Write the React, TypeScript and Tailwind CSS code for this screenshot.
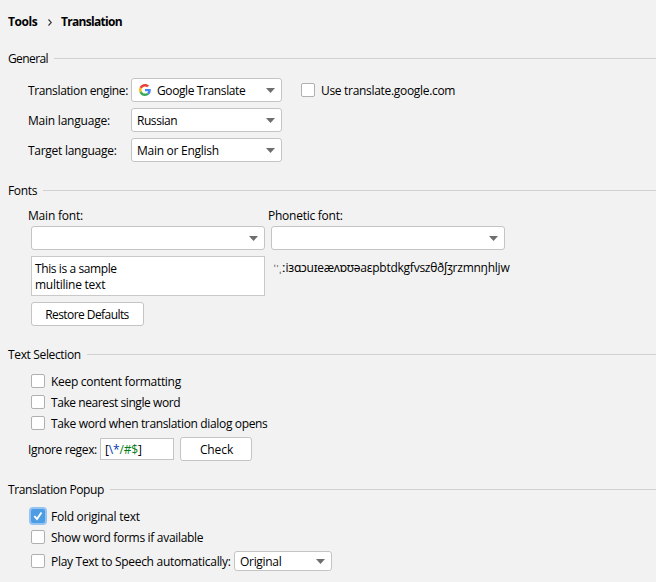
import React from 'react';

function Label({ children, className = '' }: { children: React.ReactNode; className?: string }) {
  return <span className={`whitespace-pre ${className}`}>{children}</span>;
}

function Section({ title, track = '', className = '' }: { title: string; track?: string; className?: string }) {
  return (
    <div className={`ml-2 flex h-4 items-center ${className}`}>
      <Label className={`shrink-0 ${track}`}>{title}</Label>
      <div className="mb-[2px] h-px flex-1 bg-[#d1d1d1]" />
    </div>
  );
}

function Select({ children, className = '' }: { children?: React.ReactNode; className?: string }) {
  return (
    <div className={`flex shrink-0 items-center rounded-[3px] border border-[#c4c4c4] bg-white pr-[6px] pl-[5px] ${className}`}>
      {children}
      <svg className="ml-auto" width="9" height="5" viewBox="0 0 9 5">
        <path d="M0 0h9L4.500 5z" fill="#6e6e6e" />
      </svg>
    </div>
  );
}

function Checkbox({ checked = false }: { checked?: boolean }) {
  if (checked) {
    return (
      <div className="flex h-[14px] w-[14px] shrink-0 items-center justify-center rounded-[2px] bg-[#4d9de5] ring-2 ring-[#97c3f3]">
        <svg width="14" height="14" viewBox="0 0 14 14" fill="none">
          <path d="M3.300 7.200L6 10L10.500 3.500" stroke="white" strokeWidth="1.900" />
        </svg>
      </div>
    );
  }
  return <div className="h-[14px] w-[14px] shrink-0 rounded-[2px] border border-[#b0b0b0] bg-white" />;
}

function CheckRow({ text, checked, track = '', className = '' }: { text: string; checked?: boolean; track?: string; className?: string }) {
  return (
    <div className={`ml-[31px] flex h-[14px] items-center gap-[6px] ${className}`}>
      <Checkbox checked={checked} />
      <Label className={`pt-[2px] ${track}`}>{text}</Label>
    </div>
  );
}

function GoogleIcon() {
  return (
    <svg className="ml-[2px] mr-[6px] shrink-0" width="12" height="12" viewBox="0 0 48 48">
      <path fill="#EA4335" d="M24 9.500c3.540 0 6.710 1.220 9.210 3.600l6.850-6.850C35.900 2.380 30.470 0 24 0 14.620 0 6.510 5.380 2.560 13.220l7.980 6.190C12.430 13.720 17.740 9.500 24 9.500z" />
      <path fill="#4285F4" d="M46.980 24.550c0-1.570-.15-3.090-.38-4.550H24v9.020h12.940c-.58 2.960-2.260 5.480-4.780 7.180l7.730 6c4.510-4.180 7.090-10.360 7.090-17.650z" />
      <path fill="#FBBC05" d="M10.530 28.590c-.48-1.450-.76-2.990-.76-4.590s.27-3.140.76-4.590l-7.980-6.190C.92 16.460 0 20.120 0 24c0 3.880.92 7.540 2.560 10.780z" />
      <path fill="#34A853" d="M24 48c6.480 0 11.930-2.130 15.890-5.810l-7.730-6c-2.150 1.450-4.920 2.300-8.160 2.300-6.260 0-11.570-4.220-13.470-9.910l-7.980 6.190C6.510 42.620 14.620 48 24 48z" />
    </svg>
  );
}

export default function App() {
  return (
    <div className="flex h-[582px] w-[656px] flex-col overflow-hidden bg-[#f2f2f2] font-['Open_Sans','Noto_Sans',sans-serif] text-[12px] leading-4 text-black">
      <div className="mt-[14px] ml-2 flex h-4 shrink-0 items-center font-bold">
        <Label className="w-[40px] tracking-[-0.45px]">Tools</Label>
        <svg className="mr-[9px]" width="4" height="7" viewBox="0 0 4 7" fill="none">
          <path d="M.5.500L3.300 3.500L.5 6.500" stroke="#333" strokeWidth="1.100" />
        </svg>
        <Label className="tracking-[-0.7px]">Translation</Label>
      </div>

      <Section title="General" className="mt-[21px]" track="w-[46px] tracking-[-0.6px]" />
      <div className="mt-[11px] flex h-6 items-center">
        <Label className="ml-7 w-[103px] pt-[2px] tracking-[-0.36px]">Translation engine:</Label>
        <Select className="h-6 w-[151px]">
          <GoogleIcon />
          <Label className="pt-[2px] tracking-[-0.39px]">Google Translate</Label>
        </Select>
        <div className="ml-[19px] flex items-center gap-[6px]">
          <Checkbox />
          <Label className="pt-[2px] tracking-[-0.31px]">Use translate.google.com</Label>
        </div>
      </div>
      <div className="mt-[6px] flex h-6 items-center">
        <Label className="ml-7 w-[103px] pt-[2px] tracking-[-0.22px]">Main language:</Label>
        <Select className="h-6 w-[151px]"><Label className="pt-[2px] tracking-[-0.45px]">Russian</Label></Select>
      </div>
      <div className="mt-[6px] flex h-6 items-center">
        <Label className="ml-7 w-[103px] pt-[2px] tracking-[-0.27px]">Target language:</Label>
        <Select className="h-6 w-[151px]"><Label className="pt-[2px] tracking-[-0.27px]">Main or English</Label></Select>
      </div>

      <Section title="Fonts" className="mt-[21px]" track="w-[35px] tracking-[-0.35px]" />
      <div className="mt-[8px] mb-px flex h-[18px] items-center">
        <Label className="ml-7 w-[240px] tracking-[-0.2px]">Main font:</Label>
        <Label className="tracking-[-0.25px]">Phonetic font:</Label>
      </div>
      <div className="ml-[31px] flex gap-[6px]">
        <Select className="h-6 w-[234px]" />
        <Select className="h-6 w-[234px]" />
      </div>
      <div className="mt-[6px] ml-[31px] flex h-10">
        <div className="w-[234px] border border-[#c9c9c9] bg-white pt-1 pl-[3px]">
          <Label className="block tracking-[-0.4px]">This is a sample</Label>
          <Label className="block tracking-[-0.25px]">multiline text</Label>
        </div>
        <Label className="mt-1 ml-[9px] tracking-[-0.25px]"><span className="text-[9px] tracking-[1px] text-[#444]">ˈ'ˌ</span>ːiɜɑɔuɪeæʌɒʊəaɛpbtdkgfvszθðʃʒrzmnŋhljw</Label>
      </div>
      <button className="mt-[6px] ml-[31px] flex h-6 w-[113px] shrink-0 items-center justify-center rounded-[3px] border border-[#c4c4c4] bg-white">
        <Label className="pt-[2px] pr-px tracking-[-0.57px]">Restore Defaults</Label>
      </button>

      <Section title="Text Selection" className="mt-[21px]" track="w-[79px] tracking-[-0.35px]" />
      <CheckRow text="Keep content formatting" className="mt-[11px]" track="tracking-[-0.3px]" />
      <CheckRow text="Take nearest single word" className="mt-[7px]" track="tracking-[-0.42px]" />
      <CheckRow text="Take word when translation dialog opens" className="mt-[7px]" track="tracking-[-0.35px]" />
      <div className="mt-[7px] ml-7 flex h-6 items-center">
        <Label className="w-[72px] pt-[2px] tracking-[-0.36px]">Ignore regex:</Label>
        <div className="flex h-[22px] w-[74px] items-center border border-[#c4c4c4] bg-white pl-1">
          <Label className="pt-[2px] tracking-[-0.15px]">[<span className="text-[#0037b3]">\*</span><span className="text-[#067d17]">/#$</span>]</Label>
        </div>
        <button className="ml-[6px] flex h-6 w-[72px] items-center justify-center rounded-[3px] border border-[#c4c4c4] bg-white">
          <Label className="pt-[2px] pl-px tracking-[-0.1px]">Check</Label>
        </button>
      </div>

      <Section title="Translation Popup" className="mt-[21px]" track="w-[102px] tracking-[-0.38px]" />
      <CheckRow text="Fold original text" checked className="mt-[11px]" track="tracking-[-0.26px]" />
      <CheckRow text="Show word forms if available" className="mt-[7px]" track="tracking-[-0.31px]" />
      <div className="mt-[7px] ml-[31px] flex h-5 items-center">
        <Checkbox />
        <Label className="ml-[6px] w-[183px] pt-[2px] tracking-[-0.29px]">Play Text to Speech automatically:</Label>
        <Select className="h-5 w-[98px]"><Label className="pt-[2px] tracking-[-0.3px]">Original</Label></Select>
      </div>
    </div>
  );
}
